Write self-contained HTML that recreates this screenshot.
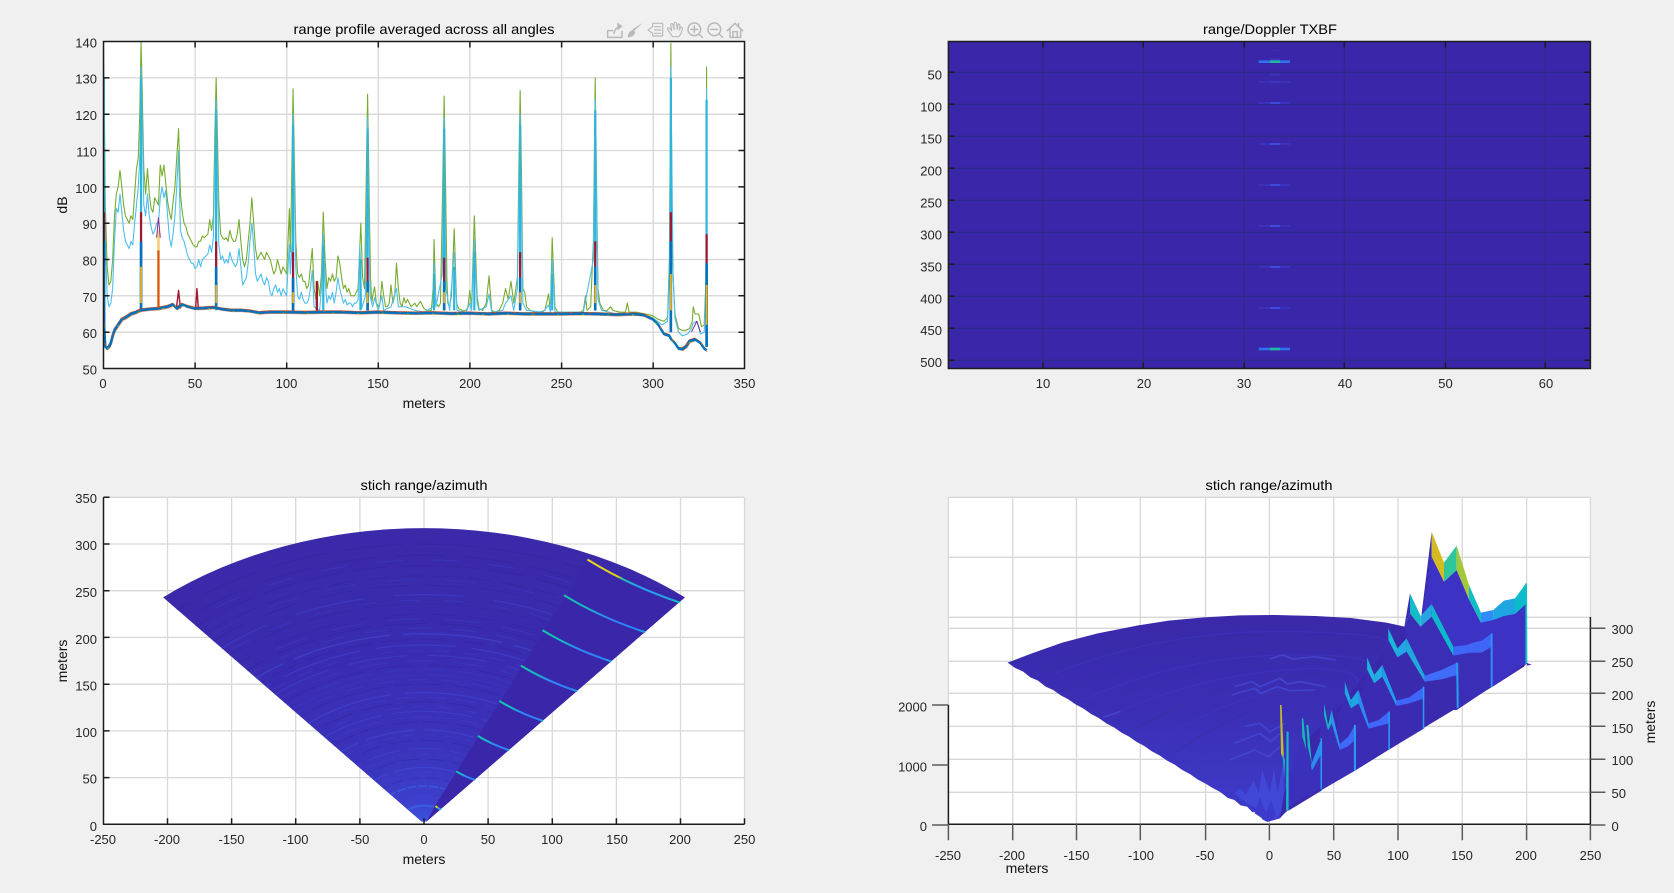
<!DOCTYPE html>
<html><head><meta charset="utf-8"><title>range profile</title>
<style>
html,body{margin:0;padding:0;background:#f0f0f0;width:1674px;height:893px;overflow:hidden}
svg{display:block;filter:blur(.35px)}
text{font-family:"Liberation Sans",Arial,sans-serif;font-size:13px;fill:#262626}
.t{font-size:14px;fill:#000;text-anchor:middle}
.l{font-size:14px;fill:#111;text-anchor:middle}
.m{text-anchor:middle}
.e{text-anchor:end}
.g{stroke:#d8d8d8;stroke-width:1.3;fill:none}
.d{stroke:#1c1c1c;stroke-width:1.5;fill:none}
.c{fill:none;vector-effect:non-scaling-stroke;stroke-linejoin:round}
.s{fill:none;stroke:#4252e0;vector-effect:non-scaling-stroke}
.k{fill:none;stroke:#2f2090;opacity:.3;vector-effect:non-scaling-stroke}
.b{fill:none;stroke:#3a78f0;vector-effect:non-scaling-stroke}
.n{fill:none;stroke-width:2;vector-effect:non-scaling-stroke}
.i{fill:none;stroke:#b9b9b9;stroke-width:4.5;stroke-linecap:round;stroke-linejoin:round}
</style></head><body>
<svg width="1674" height="893" viewBox="0 0 1674 893" xmlns="http://www.w3.org/2000/svg">
<defs>
<clipPath id="p1"><rect x="103.5" y="41.5" width="641" height="327"/></clipPath>
<clipPath id="left"><polygon points="0,0 -257,306 0,420 163,365"/></clipPath>
<radialGradient id="rg" gradientUnits="userSpaceOnUse" cx="0" cy="0" r="317">
<stop offset="0" stop-color="#3c55e0"/><stop offset=".08" stop-color="#3c40cc"/><stop offset=".25" stop-color="#3b33bc"/><stop offset=".6" stop-color="#3a2cb0"/><stop offset="1" stop-color="#3a29a9"/></radialGradient>
<linearGradient id="a0" x1="0" y1="1" x2="1" y2="0"><stop offset="0" stop-color="#e8d820"/><stop offset=".36" stop-color="#d4d020"/><stop offset=".42" stop-color="#22c0a8"/><stop offset=".6" stop-color="#2a9af0"/><stop offset=".9" stop-color="#20a8e0"/><stop offset="1" stop-color="#10c0b0"/></linearGradient>
<linearGradient id="a1" x1="0" y1="1" x2="1" y2="0"><stop offset="0" stop-color="#14c8a8"/><stop offset=".35" stop-color="#14b8c8"/><stop offset=".55" stop-color="#2f88f8"/><stop offset=".9" stop-color="#2f80fa"/><stop offset="1" stop-color="#14b0d8"/></linearGradient>
<linearGradient id="sf" x1="0" y1="0" x2="0" y2="1"><stop offset="0" stop-color="#3a29a9"/><stop offset=".5" stop-color="#3b2fb6"/><stop offset="1" stop-color="#3e3ccc"/></linearGradient>
<polyline id="floor" class="c" points="0.3,62 1,56 2,55.5 3,56 4,57 5,59 6,60.5 8,62 10,63.5 12,64 15,65 18,65.5 20,66 25,66.3 30,66.5 35,67 38,67.6 40,66.5 43,67.6 46,67 50,66.5 55,66.6 60,66.8 65,66.3 70,66 75,66 80,65.8 85,65.3 90,65.5 100,65.5 110,65.4 120,65.5 130,65.5 140,65.3 150,65.5 160,65.3 170,65.2 180,65.3 190,65.1 200,65.2 210,65 220,65.2 230,65 240,65 250,65 260,65.1 270,65 280,64.8 290,65 295,64.7 300,63.5 303,62 306,59.5 309,59 310,58 312,57 314,55.5 316,55.3 318,56 320,57.5 323,58 326,57 328,55.5 329.3,55"/>
</defs>

<!-- PLOT 1 -->
<rect x="103.5" y="41.5" width="641" height="327" fill="#fff"/>
<path class="g" d="M195.1 41.5V368.5M286.7 41.5V368.5M378.3 41.5V368.5M469.9 41.5V368.5M561.6 41.5V368.5M653.2 41.5V368.5M103.5 332.2H744.5M103.5 295.8H744.5M103.5 259.5H744.5M103.5 223.2H744.5M103.5 186.9H744.5M103.5 150.5H744.5M103.5 114.2H744.5M103.5 77.9H744.5"/>
<g clip-path="url(#p1)"><g transform="translate(103.5,550.15) scale(1.8314,-3.633)">
<polyline class="c" stroke="#77ac30" stroke-width="1.1" points="0,140 0.5,120 1,95 2,78 3,73 4,74 5,80 6,92 7,98 8,100 9,104.5 10,100 11,95 12,92 13,91 14,90 15,92 16,91 17,98 18,105 19,108 19.8,120 20.5,140 21.2,125 22,105 23,98 24,105 25,98 26,94 27,93 28,97 29,96 30,95 31,106 32,103 33,106 34,101 35,96 36,93 37,91 38,96 39,100 40,108 41,116 42,98 43,93 44,90 45,89 46,87 47,86 48,85 49,84 50,83.5 51,83.5 52,85 53,85 54,86.5 55,86 56,86.5 57,87 58,91 59,88 60,92 60.7,112 61.5,130 62.3,112 63,95 64,87 65,86 66,85.5 67,86 68,85 69,88 70,86 71,85 72,85 73,87 74,91 75,85 76,80 77,78 78,80 79,85 80,90 81,97 82,90 83,83 84,80 85,81 86,82 87,81 88,80 89,82 90,81 91,80 92,78 93,76 94,77 95,80 96,78 97,76 98,78 99,77 100,76 101,88 101.5,94 102,82 102.7,100 103.5,127 104.3,105 105,85 106,76 107,75 108,76 109,74 110,74 111,72 112,73 113,78 114,83 115,72 116,69 117,74 118,70 119,76 120,93 121,80 122,72 123,75 124,74 125,76 126,74 127,75 128,81 129,79 130,75 131,72 132,73 133,71 134,72 135,70 136,70 137,70 138,71 139,72 139.5,78 140.5,90 141.5,75 142.5,72 143.4,100 144.2,125.5 145,100 145.8,75 146.5,68 147,70 148,72.5 149,68 150,67 151,68 152,74 153,70 154,67 155,67 156,68 157,73 158,68 159,70 160,79 161,72 162,68 163,67 164,69.5 165,68 166,69 167,68 168,67 170,68 171,67 173,68.5 175,66.5 177,66 179,66 180,72 180.5,85.5 181.5,68 183,67 184,68 185.2,100 186,125 186.8,100 187.5,75 188,68 189,67 190,70 191.5,88.5 192.8,68 194,66.5 196,66 198,66 199,67 200,71.5 201,67 202.5,92 204,70 205,66.5 207,66 209,68 210.5,75.5 212,66 214,65.5 216,66 218,68 219.5,72 221,69 222.5,74 224,68 226,75 226.8,105 227.5,126.5 228.2,105 229,72 230,71 231,67 233,66 235,65.5 238,65.5 241,66 243,70.5 244,66 245,86 246.5,67 248,65.5 252,65.5 256,65.5 260,65.5 262,66 263.2,70 264,66 266,67 267.5,85 268.5,130 269.5,90 270,72 271,68 273,66 275,66 276,66.5 277,67 278,66 282,65.5 285,65.5 286,68 287,65.5 291,65.5 296,65 300,64.5 303,63.5 306,63 308,64 309,80 309.8,139.5 310.6,80 312,65 314,61 316,60.5 318,60.5 320,61 321.5,63 322,67 323,65 325,65 326.5,61.5 328,62 329,75 329.3,133 329.6,60"/>
<polyline class="c" stroke="#4dbeee" stroke-width="1.1" points="0.2,133 1,85 2,70 3,67 4,68 5,72 6,85 7,94 8,93 9,98 10,93 11,88 12,85 13,84 14,83 15,85 16,84 17,90 18,95 19,100 20,110 20.5,133 21.5,110 22,95 23,92 24,98 25,92 26,89 27,87 28,88 29,90 30,90 31,97 32,100 33,97 34,99 35,92 36,86 37,83.5 38,87 39,92 40,100 41,110 42,88 43,86 44,85 45,83 46,81 47,80 48,79 49,79 50,77.5 51,78 52,80 53,78 54,80 55,80.5 56,81 57,81.5 58,84 59,82 60,86 61.5,124 63,84 64,80 65,81 66,79 67,80 68,79 69,82 70,80 71,79 72,78 73,79 74,83 75,78 76,73 77,74 78,75 79,79 80,85 81,90 82,84 83,76 84,74 85,75 86,76 87,74 88,73 89,75 90,74 91,71 92,70 93,72 94,73 95,71 96,72 97,70 98,72 99,71 100,70 101,80 101.5,84 102,76 103,85 103.5,120 105,78 106,70 107,69 108,71 109,69 110,68 111,68 112,69 113,72 114,77 115,67 118,66 119,72 120,87 121,74 122,68 123,70 124,69 125,71 126,68 127,71 128,75 129,72 130,70 131,68 132,69 133,67.5 134,68 135,68 136,67 137,68 138,68 139,69 140,84 141,66.5 143,70 144.2,119 145.5,70 147,67 148,69.5 150,66 152,70 153,66 157,67 160,72 161,67 165,67 170,66 175,65.5 180,67 180.5,79 181.5,67 185,76 186,119 187,72 189,66 191.5,82 193,66 198,65.5 200,68 201,66 202.5,85.5 204,68 205,66 209,67 210.5,70.5 212,65.5 218,66 219.5,68 222.5,70 224,66 226,72 227.5,120 229,68 231,66 240,65.5 243,67.5 244,65.5 245,80 246.5,65.5 262,65.5 267.5,80 268.5,124 270,69 272,66 280,65 296,64.5 300,64 305,62 308,63 309,76 309.8,133 311,76 312,64 314,60 316,59 319,59.5 321,61 322,62.5 324,63 326,59.5 328,60 329,72 329.3,127 329.6,58"/>
<path class="c" stroke="#2fb4dc" stroke-width="2.2" d="M20.5 66V130M61.5 66V121M103.5 66V117M144.2 66V116M186 66V116M227.5 66V117M268.5 66V121M309.8 60V130M329.3 56V124M0.2 62V130M245 66V76M202.5 66V82M120 66V84M140.3 66V80M191.5 66V78M180.5 66V76"/>
<path class="c" stroke="#edb120" stroke-width="3" stroke-opacity=".55" d="M30 66.5V88"/>
<path class="c" stroke="#7e2f8e" stroke-width="1" d="M29 86L30 91.5L31 86M0 73L0.6 60M321 60L324 63L326 60M329 60L329.3 68"/>
<path class="c" stroke="#d95319" stroke-width="2" d="M30 66.5V82.5M116.5 66V74M0.3 58V75"/>
<path class="c" stroke="#a2142f" stroke-width="2.2" d="M0.3 60V93M20.5 66V93M61.5 67V85M103.5 66V82M116.5 66V74M144.2 66V80.5M186 66V80.5M227.5 66V82M268.5 66V85M309.8 60V93M329.3 56V87"/>
<path class="c" stroke="#a2142f" stroke-width="1.4" d="M39.8 66.5L41 71.5L42 66.5M50.3 66.5L51 72L51.8 66.5"/>
<path class="c" stroke="#0072bd" stroke-width="2.6" d="M0.3 60V85M20.5 66V85M61.5 67V78M103.5 66V75M144.2 66V74M186 66V74M227.5 66V75M268.5 66V78M309.8 60V85M329.3 56V79"/>
<path class="c" stroke="#edb120" stroke-width="1.8" d="M20.5 68V78M61.5 68V73M103.5 68V71M144.2 68V71M186 68V71M227.5 68V71M268.5 68V73M309.8 66V76M329.3 62V73"/>
<use href="#floor" stroke="#edb120" stroke-width="1" opacity=".6" transform="translate(0,0.4)"/>
<use href="#floor" stroke="#d95319" stroke-width="1" opacity=".7" transform="translate(0.4,-0.35)"/>
<use href="#floor" stroke="#a2142f" stroke-width="1" opacity=".7" transform="translate(-0.3,0.35)"/>
<use href="#floor" stroke="#0072bd" stroke-width="2.4"/>
<use href="#floor" stroke="#d95319" stroke-width="1" stroke-dasharray="2 17" transform="translate(0,0.25)"/>
<use href="#floor" stroke="#77ac30" stroke-width="1" stroke-dasharray="2 23" transform="translate(0,-0.25)"/>
</g></g>
<rect class="d" x="103.5" y="41.5" width="641" height="327"/>
<path class="d" d="M195.1 41.5v6M286.7 41.5v6M378.3 41.5v6M469.9 41.5v6M561.6 41.5v6M653.2 41.5v6M195.1 368.5v-6M286.7 368.5v-6M378.3 368.5v-6M469.9 368.5v-6M561.6 368.5v-6M653.2 368.5v-6M103.5 332.2h6M103.5 295.8h6M103.5 259.5h6M103.5 223.2h6M103.5 186.9h6M103.5 150.5h6M103.5 114.2h6M103.5 77.9h6M744.5 332.2h-6M744.5 295.8h-6M744.5 259.5h-6M744.5 223.2h-6M744.5 186.9h-6M744.5 150.5h-6M744.5 114.2h-6M744.5 77.9h-6"/>
<text class="t" x="424" y="34" textLength="261" lengthAdjust="spacingAndGlyphs">range profile averaged across all angles</text>
<text class="e" x="97" y="47.5">140</text><text class="e" x="97" y="83.5">130</text><text class="e" x="97" y="120">120</text><text class="e" x="97" y="156.5">110</text><text class="e" x="97" y="193">100</text><text class="e" x="97" y="229">90</text><text class="e" x="97" y="265.5">80</text><text class="e" x="97" y="302">70</text><text class="e" x="97" y="338">60</text><text class="e" x="97" y="374.5">50</text>
<text class="m" x="103" y="388">0</text><text class="m" x="195" y="388">50</text><text class="m" x="286.5" y="388">100</text><text class="m" x="378" y="388">150</text><text class="m" x="470" y="388">200</text><text class="m" x="561.5" y="388">250</text><text class="m" x="653" y="388">300</text><text class="m" x="744.5" y="388">350</text>
<text class="l" x="424" y="408">meters</text>
<text class="l" transform="translate(67,205) rotate(-90)">dB</text>

<!-- toolbar icons -->
<g transform="translate(560,0) scale(.3333)">
<path class="i" d="M143 112V92H158M143 112H186V94M162 100Q165 84 178 80"/><path d="M172 67L188 79L172 91Z" fill="#b9b9b9"/>
<path d="M248 69L222 93L217 88Z" fill="#b9b9b9"/><path d="M220 90Q205 92 203 112Q222 112 226 97Z" fill="#b9b9b9"/>
<path class="i" style="stroke-width:3.5" d="M308 70H278V80L264 90L278 100V108H308ZM284 80H302M284 90H302M284 100H302"/>
<path class="i" style="stroke-width:3.5" d="M338 110Q330 100 323 88Q322 80 330 86L335 92L332 74Q334 68 339 74L342 88V70Q346 64 350 70L351 88L354 74Q358 70 360 76L358 90L362 82Q368 80 367 88Q364 102 356 110Z"/>
<circle class="i" cx="403" cy="88" r="19"/><path class="i" d="M416 102L427 112M393 88H413M403 78V98"/>
<circle class="i" cx="463" cy="88" r="19"/><path class="i" d="M477 102L488 112M453 88H473"/>
<path class="i" d="M502 92L525 70L548 92M510 88V112H542V88M519 112V95H532V112M536 70V78"/>
</g>

<!-- PLOT 2 -->
<rect x="948.4" y="41.5" width="642" height="327" fill="#3a26a8"/>
<path d="M1043 41.5V368.5M1143.3 41.5V368.5M1244.2 41.5V368.5M1344.3 41.5V368.5M1445.5 41.5V368.5M1545.3 41.5V368.5M948.4 72.3H1590.4M948.4 104.3H1590.4M948.4 136.3H1590.4M948.4 168.3H1590.4M948.4 200.3H1590.4M948.4 232.3H1590.4M948.4 264.3H1590.4M948.4 296.3H1590.4M948.4 328.3H1590.4M948.4 360.3H1590.4" stroke="#2c2a84" stroke-width="1" fill="none"/>
<rect x="1270" y="50" width="10" height="1" fill="#3e2eb4"/><rect x="1270" y="58.5" width="10" height="2" fill="#3f34c0"/><rect x="1270" y="73" width="10" height="3" fill="#3e2eb4"/>
<rect x="1258.7" y="60.4" width="31.3" height="2.6" fill="#2f72f2"/><rect x="1270" y="60.4" width="10" height="2.6" fill="#1fb8a0"/>
<rect x="1258.7" y="347.7" width="31.3" height="2.6" fill="#2f72f2"/><rect x="1270" y="347.7" width="10" height="2.6" fill="#1fb8a0"/>
<g fill="#3a32bc"><rect x="1258.7" y="81" width="31.3" height="1.8"/><rect x="1258.7" y="102" width="31.3" height="2"/><rect x="1258.7" y="143" width="31.3" height="2"/><rect x="1258.7" y="184" width="31.3" height="2"/><rect x="1258.7" y="225" width="31.3" height="2"/><rect x="1258.7" y="266" width="31.3" height="2"/><rect x="1258.7" y="307" width="31.3" height="2"/></g>
<g fill="#3f4ade"><rect x="1270" y="81" width="10" height="1.8" fill="#3c38c8"/><rect x="1270" y="102" width="10" height="2"/><rect x="1270" y="143" width="10" height="2"/><rect x="1270" y="184" width="10" height="2"/><rect x="1270" y="225" width="10" height="2"/><rect x="1270" y="266" width="10" height="2"/><rect x="1270" y="307" width="10" height="2"/></g>
<rect class="d" x="948.4" y="41.5" width="642" height="327"/>
<path class="d" d="M1043 41.5v6M1143.3 41.5v6M1244.2 41.5v6M1344.3 41.5v6M1445.5 41.5v6M1545.3 41.5v6M1043 368.5v-6M1143.3 368.5v-6M1244.2 368.5v-6M1344.3 368.5v-6M1445.5 368.5v-6M1545.3 368.5v-6M948.4 72.3h6M948.4 104.3h6M948.4 136.3h6M948.4 168.3h6M948.4 200.3h6M948.4 232.3h6M948.4 264.3h6M948.4 296.3h6M948.4 328.3h6M948.4 360.3h6M1590.4 72.3h-6M1590.4 104.3h-6M1590.4 136.3h-6M1590.4 168.3h-6M1590.4 200.3h-6M1590.4 232.3h-6M1590.4 264.3h-6M1590.4 296.3h-6M1590.4 328.3h-6M1590.4 360.3h-6"/>
<text class="t" x="1270" y="34" textLength="134" lengthAdjust="spacingAndGlyphs">range/Doppler TXBF</text>
<text class="e" x="942" y="79.5">50</text><text class="e" x="942" y="111.5">100</text><text class="e" x="942" y="143.5">150</text><text class="e" x="942" y="175.5">200</text><text class="e" x="942" y="207.5">250</text><text class="e" x="942" y="239.5">300</text><text class="e" x="942" y="271.5">350</text><text class="e" x="942" y="303.5">400</text><text class="e" x="942" y="335">450</text><text class="e" x="942" y="367">500</text>
<text class="m" x="1043" y="388">10</text><text class="m" x="1144" y="388">20</text><text class="m" x="1244" y="388">30</text><text class="m" x="1345" y="388">40</text><text class="m" x="1445.5" y="388">50</text><text class="m" x="1546" y="388">60</text>

<!-- PLOT 3 -->
<rect x="103.5" y="497.3" width="641" height="327" fill="#fff"/>
<path class="g" d="M167.5 497.3V824.3M231.6 497.3V824.3M295.7 497.3V824.3M359.9 497.3V824.3M424 497.3V824.3M488.1 497.3V824.3M552.3 497.3V824.3M616.4 497.3V824.3M680.5 497.3V824.3M103.5 777.6H744.5M103.5 730.9H744.5M103.5 684.2H744.5M103.5 637.4H744.5M103.5 590.7H744.5M103.5 544H744.5M103.5 497.3H744.5M744.5 497.3V824.3"/>
<g transform="translate(424,824.3) scale(1.282,-0.934)">
<path d="M-2 3L-203.5 243A316.5 316.5 0 0 0 203.5 243L2 3Z" fill="url(#rg)"/>
<g clip-path="url(#left)">
<g stroke-width="1">
<path class="k" stroke-dasharray="12 6" d="M-50 0A50 50 0 0 0 50 0"/><path class="k" stroke-dasharray="18 7" d="M-70 0A70 70 0 0 0 70 0"/><path class="k" stroke-dasharray="22 9" d="M-90 0A90 90 0 0 0 90 0"/><path class="k" stroke-dasharray="26 6" d="M-110 0A110 110 0 0 0 110 0"/><path class="k" stroke-dasharray="30 12" d="M-131 0A131 131 0 0 0 131 0"/><path class="k" stroke-dasharray="20 9" d="M-150 0A150 150 0 0 0 150 0"/><path class="k" stroke-dasharray="36 14" d="M-170 0A170 170 0 0 0 170 0"/><path class="k" stroke-dasharray="28 10" d="M-198 0A198 198 0 0 0 198 0"/><path class="k" stroke-dasharray="44 12" d="M-215 0A215 215 0 0 0 215 0"/><path class="k" stroke-dasharray="26 14" d="M-225 0A225 225 0 0 0 225 0"/><path class="k" stroke-dasharray="50 9" d="M-236 0A236 236 0 0 0 236 0"/><path class="k" stroke-dasharray="40 16" d="M-256 0A256 256 0 0 0 256 0"/><path class="k" stroke-dasharray="22 12" d="M-266 0A266 266 0 0 0 266 0"/><path class="k" stroke-dasharray="34 12" d="M-277 0A277 277 0 0 0 277 0"/><path class="k" stroke-dasharray="50 18" d="M-288 0A288 288 0 0 0 288 0"/><path class="k" stroke-dasharray="60 14" d="M-300 0A300 300 0 0 0 300 0"/>
</g>
<g opacity=".22" stroke-width="1.2">
<path class="s" stroke-dasharray="6 5" d="M-46 0A46 46 0 0 0 46 0"/><path class="s" stroke-dasharray="8 6" d="M-56 0A56 56 0 0 0 56 0"/><path class="s" stroke-dasharray="10 8" d="M-75 0A75 75 0 0 0 75 0"/><path class="s" stroke-dasharray="12 9" d="M-96 0A96 96 0 0 0 96 0"/><path class="s" stroke-dasharray="16 8" d="M-115 0A115 115 0 0 0 115 0"/><path class="s" stroke-dasharray="14 12" d="M-126 0A126 126 0 0 0 126 0"/><path class="s" stroke-dasharray="20 10" d="M-136 0A136 136 0 0 0 136 0"/><path class="s" stroke-dasharray="18 14" d="M-155 0A155 155 0 0 0 155 0"/><path class="s" stroke-dasharray="24 12" d="M-166 0A166 166 0 0 0 166 0"/><path class="s" stroke-dasharray="30 18" d="M-175 0A175 175 0 0 0 175 0"/><path class="s" stroke-dasharray="16 12" d="M-186 0A186 186 0 0 0 186 0"/><path class="s" stroke-dasharray="24 20" d="M-210 0A210 210 0 0 0 210 0"/><path class="s" stroke-dasharray="34 24" d="M-220 0A220 220 0 0 0 220 0"/><path class="s" stroke-dasharray="20 24" d="M-240 0A240 240 0 0 0 240 0"/><path class="s" stroke-dasharray="30 30" d="M-262 0A262 262 0 0 0 262 0"/><path class="s" stroke-dasharray="26 30" d="M-283 0A283 283 0 0 0 283 0"/>
</g>
<g opacity=".6">
<path class="b" stroke-width="2" opacity=".8" d="M-20 0A20 20 0 0 0 20 0"/>
<path class="s" stroke-width="1.2" opacity=".6" stroke-dasharray="4 3" d="M-30 0A30 30 0 0 0 30 0"/>
<path class="b" stroke-width="1.6" opacity=".8" stroke-dasharray="9 2" d="M-41 0A41 41 0 0 0 41 0"/>
<path class="s" stroke-width="1.3" opacity=".8" stroke-dasharray="70 6" d="M-61 0A61 61 0 0 0 61 0"/>
<path class="s" stroke-width="1.2" opacity=".6" stroke-dasharray="34 8" d="M-81 0A81 81 0 0 0 81 0"/>
<path class="s" stroke-width="1.3" opacity=".75" stroke-dasharray="50 9" d="M-101 0A101 101 0 0 0 101 0"/>
<path class="s" stroke-width="1.2" opacity=".65" stroke-dasharray="80 10" d="M-121 0A121 121 0 0 0 121 0"/>
<path class="s" stroke-width="1.3" opacity=".75" stroke-dasharray="100 14" d="M-141 0A141 141 0 0 0 141 0"/>
<path class="s" stroke-width="1" opacity=".35" d="M-160 0A160 160 0 0 0 160 0"/>
<path class="s" stroke-width="1.2" opacity=".6" stroke-dasharray="60 20" d="M-181 0A181 181 0 0 0 181 0"/>
<path class="s" stroke-width="1.2" opacity=".7" stroke-dasharray="80 16" d="M-192 0A192 192 0 0 0 192 0"/>
<path class="s" stroke-width="1.4" opacity=".8" stroke-dasharray="100 12" d="M-204 0A204 204 0 0 0 204 0"/>
<path class="s" stroke-width="1.2" opacity=".65" stroke-dasharray="70 30" d="M-246 0A246 246 0 0 0 246 0"/>
</g>
</g>
<polygon points="2,3 7.3,16.5 8.1,18.5 121,267 126.1,283.2 203.5,243" fill="#3a26a8" stroke="none"/>
<path d="M127.5 283.5A310 310 0 0 1 199.3 237.5" class="n" stroke="url(#a0)"/>
<path d="M109.2 245.3A268.5 268.5 0 0 1 172.6 205.7" class="n" stroke="url(#a1)"/>
<path d="M92.5 207.8A227.5 227.5 0 0 1 146.2 174.3" class="n" stroke="url(#a1)"/>
<path d="M75.6 169.9A186 186 0 0 1 119.6 142.5" class="n" stroke="url(#a1)"/>
<path d="M58.8 132A144.5 144.5 0 0 1 92.9 110.7" class="n" stroke="url(#a1)"/>
<path d="M42.1 94.5A103.5 103.5 0 0 1 66.5 79.3" class="n" stroke="url(#a1)"/>
<path d="M25.2 56.6A62 62 0 0 1 39.9 47.5" class="n" stroke="url(#a1)"/>
<path d="M9 19.5A20.5 20.5 0 0 1 13.2 15.7" class="n" stroke="url(#a0)"/>
</g>
<path class="d" d="M103.5 497.3V824.3H744.5M103.5 497.3h6M103.5 544h6M103.5 590.7h6M103.5 637.4h6M103.5 684.2h6M103.5 730.9h6M103.5 777.6h6M167.5 824.3v-6M231.6 824.3v-6M295.7 824.3v-6M359.9 824.3v-6M424 824.3v-6M488.1 824.3v-6M552.3 824.3v-6M616.4 824.3v-6M680.5 824.3v-6M744.5 824.3v-6"/>
<text class="t" x="424" y="490" textLength="127" lengthAdjust="spacingAndGlyphs">stich range/azimuth</text>
<text class="e" x="97" y="503">350</text><text class="e" x="97" y="550">300</text><text class="e" x="97" y="597">250</text><text class="e" x="97" y="644">200</text><text class="e" x="97" y="690.5">150</text><text class="e" x="97" y="737">100</text><text class="e" x="97" y="783.5">50</text><text class="e" x="97" y="831">0</text>
<text class="m" x="103" y="844">-250</text><text class="m" x="167" y="844">-200</text><text class="m" x="231.5" y="844">-150</text><text class="m" x="295.5" y="844">-100</text><text class="m" x="360" y="844">-50</text><text class="m" x="424" y="844">0</text><text class="m" x="488" y="844">50</text><text class="m" x="552" y="844">100</text><text class="m" x="617" y="844">150</text><text class="m" x="680" y="844">200</text><text class="m" x="744.5" y="844">250</text>
<text class="l" x="424" y="864">meters</text>
<text class="l" transform="translate(67,661) rotate(-90)">meters</text>

<!-- PLOT 4 -->
<rect x="948.4" y="497.3" width="642" height="327" fill="#fff"/>
<path class="g" d="M1012.7 497.3V824.3M1076.5 497.3V824.3M1140.3 497.3V824.3M1205.6 497.3V824.3M1269.4 497.3V824.3M1333.7 497.3V824.3M1398 497.3V824.3M1462.3 497.3V824.3M1526.6 497.3V824.3M948.4 557.3H1590.4M948.4 617.3H1590.4M948.4 628.3H1590.4M948.4 661.3H1590.4M948.4 693.3H1590.4M948.4 726.3H1590.4M948.4 759.3H1590.4M948.4 792.3H1590.4M948.4 497.3H1590.4M948.4 497.3V705M1590.4 497.3V617"/>
<g transform="translate(880,460) scale(.50633,.33333)">
<!-- main surface -->
<polygon fill="url(#sf)" points="252,608 300,580 360,548 430,520 510,496 570,482 640,472 710,466 780,465 860,468 930,474 1000,488 1036,500 1010,620 900,800 810,1040 790,1075 765,1086 755,1078 748,1058 735,1056 725,1040 712,1036 700,1020 687,1014 672,996 657,984 642,970 627,958 612,942 597,930 582,914 567,902 552,886 537,874 522,858 507,846 492,830 477,818 462,802 447,790 432,774 417,762 402,746 387,734 372,718 357,706 342,690 327,680 312,662 297,652 282,634 267,624"/>
<!-- texture -->
<path fill="none" stroke="#3730a2" stroke-width="3" opacity=".6" d="M330 620Q560 490 800 500T1000 540M300 640Q550 520 800 530T990 580M360 690Q580 570 800 560T960 620M420 740Q600 620 800 610T950 670M500 810Q650 680 800 650T930 720M580 880Q700 760 790 720"/>
<path fill="none" stroke="#3d38c0" stroke-width="3" opacity=".6" d="M345 640Q560 510 800 515T995 560M400 720Q590 590 800 585T955 640M450 770Q620 650 800 630T935 700M540 850Q680 720 790 690M610 920Q720 820 790 790"/>
<!-- ridge lines on the surface -->
<path fill="none" stroke="#4242cc" stroke-width="5" d="M770 597L795 585L815 597L860 590L900 600M700 680L735 665L750 680L790 655L805 672L830 665L880 680M695 705L740 685L752 700L785 680L810 692L860 690M440 772L475 755M720 800L750 790L770 815L800 790M700 850L750 820L772 845L790 820M690 900L740 870L768 890L790 860"/>
<polygon fill="#4148d8" points="700,1000 712,985 722,1005 738,960 748,1000 755,930 770,1000 778,925 785,1000 795,920 800,1040 785,1070 768,1080 750,1050 725,1030"/>
<polygon fill="#3d3cca" points="740,1060 750,1010 762,1060 772,1020 782,1065 770,1084 755,1075"/>
<!-- wall base -->
<polygon fill="#3a28ab" points="1004,560 1036,500 1275,500 1275,615 1210,680 1140,743 1072,805 1006,868 938,932 872,990 805,1052 790,1072 798,1000 834,850 877,790 918,720 960,640"/>
<!-- yellow spike -->
<polygon fill="#c4bc2c" points="790,735 793,735 798,905 792,880"/>
<polygon fill="#18a8c8" points="795,880 798,960 800,900"/>
</g>
<g transform="translate(1300,510) scale(.33333)">
<!-- R1 -->
<polygon fill="#3c32c4" points="365,310 395,140 432,215 470,180 507,268 543,338 678,282 678,462 575,530 470,600 350,600"/>
<polygon fill="#3a2cb4" points="365,310 395,65 395,140 370,300"/>
<polygon fill="#d4bc20" points="395,65 432,158 432,215 395,140"/>
<polygon fill="#30c69c" points="432,158 470,107 470,180 432,215"/>
<polygon fill="#a4c83a" points="470,107 507,225 507,268 470,180"/>
<polygon fill="#12bcc4" points="507,225 543,308 543,338 507,268"/>
<polygon fill="#2f8cf8" points="543,308 580,300 580,330 543,338"/>
<polygon fill="#1fa6e2" points="580,300 612,272 645,265 645,312 612,318 580,330"/>
<polygon fill="#0bbcc8" points="645,265 678,220 678,282 645,312"/>
<polygon fill="#12bcc8" points="676,220 681,220 682,462 676,462"/>
<polygon fill="#3a30c0" points="678,458 695,464 682,467"/>
<!-- R2 -->
<polygon fill="#3a2db6" points="313,350 330,310 362,350 395,320 460,437 545,428 575,410 575,530 470,600 340,600"/>
<polygon fill="#3a2db6" points="313,350 330,250 330,310"/>
<polygon fill="#14bcc8" points="330,250 362,318 362,350 330,310"/>
<polygon fill="#28a4e0" points="362,318 395,282 395,320 362,350"/>
<polygon fill="#10b8cc" points="395,282 460,410 460,437 395,320"/>
<polygon fill="#3f66f6" points="460,410 500,405 520,398 545,392 575,370 575,410 545,428 510,428 460,437"/>
<polygon fill="#2f8cf8" points="572,370 578,370 578,530 572,532"/>
<polygon fill="#3a28a8" points="578,530 672,462 672,470 578,530"/>
</g>
<g transform="translate(880,460) scale(.50633,.33333)">
<!-- R3 -->
<polygon fill="#3a2aae" points="1004,540 1022,592 1040,575 1076,665 1109,658 1140,645 1140,743 1072,805 1000,800 990,620"/>
<polygon fill="#18b8d8" points="1004,505 1022,565 1022,592 1004,540"/>
<polygon fill="#25a4e6" points="1022,565 1040,535 1040,575 1022,592"/>
<polygon fill="#1ea8dc" points="1040,535 1076,647 1076,665 1040,575"/>
<polygon fill="#3f6cf8" points="1076,647 1109,630 1140,608 1140,645 1109,658 1076,665"/>
<polygon fill="#2a9cf0" points="1138,608 1142,608 1143,743 1139,745"/>
<!-- R4 -->
<polygon fill="#3a2bb2" points="962,628 976,670 992,650 1020,738 1075,715 1075,805 1006,868 950,860 950,700"/>
<polygon fill="#1eb4dc" points="962,592 976,645 976,670 962,628"/>
<polygon fill="#20aee0" points="976,645 992,615 992,650 976,670"/>
<polygon fill="#209ee8" points="992,615 1020,722 1020,738 992,650"/>
<polygon fill="#3f64f8" points="1020,722 1045,712 1075,680 1075,715 1045,730 1020,738"/>
<polygon fill="#2a9cf0" points="1072,680 1075,680 1075,805 1072,807"/>
<!-- R5 -->
<polygon fill="#3a2cb4" points="918,700 930,745 945,730 965,806 1005,790 1005,868 938,932 900,900 905,770"/>
<polygon fill="#1ea8e0" points="918,665 930,720 930,745 918,700"/>
<polygon fill="#20a4e4" points="930,720 945,690 945,730 930,745"/>
<polygon fill="#2a8cf0" points="945,690 965,790 965,806 945,730"/>
<polygon fill="#3f68f8" points="965,790 985,780 1005,755 1005,790 985,798 965,806"/>
<polygon fill="#2a9cf0" points="1004,755 1007,755 1007,868 1004,870"/>
<!-- R6 -->
<polygon fill="#3b2fb8" points="877,765 885,812 892,790 908,870 938,840 938,932 872,990 860,950 868,830"/>
<polygon fill="#14bcc0" points="877,730 885,795 885,812 877,765"/>
<polygon fill="#18b0c8" points="885,795 892,750 892,790 885,812"/>
<polygon fill="#2a94ec" points="892,750 908,852 908,870 892,790"/>
<polygon fill="#3f68f8" points="908,852 925,830 938,795 938,840 925,858 908,870"/>
<polygon fill="#2a9cf0" points="936,795 940,795 940,932 936,934"/>
<!-- R7 -->
<polygon fill="#3b30bc" points="834,830 842,870 845,840 853,930 872,880 872,990 805,1052 805,960 825,870"/>
<polygon fill="#18b8b8" points="833,775 836,775 842,870 834,830"/>
<polygon fill="#16b6c0" points="842,795 846,795 853,915 845,860"/>
<polygon fill="#2a8cf0" points="851,915 872,835 872,880 853,932"/>
<polygon fill="#2a9cf0" points="870,835 873,835 873,990 870,992"/>
<!-- near streak -->
<polygon fill="#18b8c4" points="803,815 807,815 807,1050 802,1052"/>
<polygon fill="#3a2aae" points="807,1052 872,992 872,985 807,1040"/>
</g>
<path class="d" d="M948.4 705V824.3H1590.4V617"/>
<path d="M932 705h16.4M932 765h16.4M932 825h16.4M948.4 824.3v16M1012.7 824.3v16M1076.5 824.3v16M1140.3 824.3v16M1205.6 824.3v16M1269.4 824.3v16M1333.7 824.3v16M1398 824.3v16M1462.3 824.3v16M1526.6 824.3v16M1590.4 824.3v16M1590.4 628.3h15M1590.4 661.3h15M1590.4 693.3h15M1590.4 726.3h15M1590.4 759.3h15M1590.4 792.3h15M1590.4 825h15" stroke="#5a5a5a" stroke-width="1.5" fill="none"/>
<text class="t" x="1269" y="490" textLength="127" lengthAdjust="spacingAndGlyphs">stich range/azimuth</text>
<text class="e" x="927" y="711.5">2000</text><text class="e" x="927" y="771.5">1000</text><text class="e" x="927" y="831">0</text>
<text x="1611.5" y="634">300</text><text x="1611.5" y="667">250</text><text x="1611.5" y="700">200</text><text x="1611.5" y="733">150</text><text x="1611.5" y="765">100</text><text x="1611.5" y="798">50</text><text x="1611.5" y="831">0</text>
<text class="m" x="948" y="860">-250</text><text class="m" x="1012" y="860">-200</text><text class="m" x="1076.5" y="860">-150</text><text class="m" x="1141" y="860">-100</text><text class="m" x="1205" y="860">-50</text><text class="m" x="1269.5" y="860">0</text><text class="m" x="1334" y="860">50</text><text class="m" x="1398" y="860">100</text><text class="m" x="1462" y="860">150</text><text class="m" x="1526" y="860">200</text><text class="m" x="1590.5" y="860">250</text>
<text class="l" x="1027" y="873">meters</text>
<text class="l" transform="translate(1655,722) rotate(-90)">meters</text>
</svg>
</body></html>
